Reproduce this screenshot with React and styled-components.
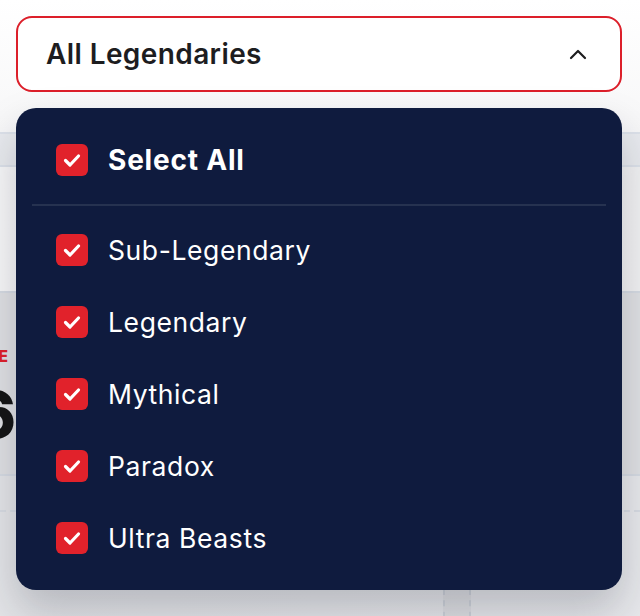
import React from "react";
import styled, { createGlobalStyle } from "styled-components";

const Global = createGlobalStyle`
  html, body { margin: 0; padding: 0; }
  body { font-family: Inter, "Noto Sans", sans-serif; background: #f6f6f7; }
  * { box-sizing: border-box; }
`;

const Page = styled.div`
  position: relative;
  width: 640px;
  height: 616px;
  overflow: hidden;
  display: flex;
  flex-direction: column;
  background: #f6f6f7;
  & > * { flex-shrink: 0; }
`;

const Header = styled.div`
  height: 132px;
  padding: 16px 18px 0 16px;
  background: linear-gradient(180deg, #ffffff 0%, #f7f7f8 100%);
`;

const Trigger = styled.button`
  width: 606px;
  height: 76px;
  border: 2px solid #dc1f2a;
  border-radius: 16px;
  background: #ffffff;
  display: flex;
  align-items: center;
  justify-content: space-between;
  padding: 0 32px 0 28px;
  font-family: Inter, sans-serif;
  font-size: 28px;
  font-weight: 600;
  color: #1d1d1f;
  letter-spacing: 0.4px;
  cursor: pointer;
`;

const Band = styled.div`
  height: 35px;
  background: #e9ebef;
  border-top: 2px solid #dde2ea;
  border-bottom: 2px solid #dde2ea;
`;

const Hero = styled.div`
  height: 124px;
  background: linear-gradient(90deg, #f8f8f9 0%, #f2f2f3 100%);
`;

const Stats = styled.div`
  height: 185px;
  background: #e0e1e4;
  border-top: 2px solid #d6dbe3;
  border-bottom: 2px solid #d6dbe3;
  display: flex;
  padding-top: 54px;
`;

const StatCol = styled.div`
  width: 18px;
  overflow: hidden;
  display: flex;
  flex-direction: column;
  align-items: flex-end;
  gap: 17px;
`;

const StatLabel = styled.div`
  white-space: nowrap;
  color: #e0202b;
  font-weight: 800;
  font-size: 16px;
  line-height: 19px;
  letter-spacing: 1px;
  margin-right: 9px;
`;

const StatValue = styled.div`
  white-space: nowrap;
  color: #151515;
  font-weight: 800;
  font-size: 64px;
  line-height: 1;
  margin-right: 2px;
`;

const Footer = styled.div`
  flex: 1 1 auto !important;
  min-height: 0;
  overflow: hidden;
  background: linear-gradient(90deg, #e4e5e8 0%, #e8e9ec 100%);
  padding-top: 34px;
`;

const DashedRule = styled.div`
  border-top: 2px dashed #d8dce3;
  display: flex;
  padding-left: 443px;
  padding-top: 77px;
`;

const DashedCell = styled.div`
  width: 28px;
  height: 40px;
  border-left: 2px dashed #cfd3da;
  border-right: 2px dashed #cfd3da;
  background: rgba(0, 0, 0, 0.03);
`;

const Panel = styled.div`
  position: absolute;
  top: 108px;
  left: 16px;
  width: 606px;
  height: 482px;
  border-radius: 20px;
  background: #0f1b3e;
  padding: 16px 16px;
  display: flex;
  flex-direction: column;
  box-shadow: 0 22px 44px rgba(20, 24, 40, 0.22);
`;

const Row = styled.label`
  height: 72px;
  display: flex;
  align-items: center;
  gap: 20px;
  padding-left: 24px;
  color: #ffffff;
  font-size: ${(p) => (p.$bold ? "28px" : "26.5px")};
  font-weight: ${(p) => (p.$bold ? 700 : 400)};
  letter-spacing: ${(p) => (p.$bold ? "0.8px" : "0.6px")};
  cursor: pointer;
`;

const Box = styled.span`
  width: 32px;
  height: 32px;
  border-radius: 6px;
  background: #e1222b;
  display: flex;
  align-items: center;
  justify-content: center;
  flex-shrink: 0;
`;

const Divider = styled.div`
  height: 2px;
  background: #263250;
  margin: 8px 0;
`;

const Check = () => (
  <Box>
    <svg width="24" height="24" viewBox="0 0 24 24" fill="none">
      <path d="M5.5 12.5 L10 17 L18.5 8" stroke="#fff" strokeWidth="3.2" strokeLinecap="round" strokeLinejoin="round" />
    </svg>
  </Box>
);

const Chevron = () => (
  <svg width="20" height="12" viewBox="0 0 20 12" fill="none">
    <path d="M3 10 L10 3 L17 10" stroke="#1d1d1f" strokeWidth="2.2" strokeLinecap="round" strokeLinejoin="round" />
  </svg>
);

const items = ["Sub-Legendary", "Legendary", "Mythical", "Paradox", "Ultra Beasts"];

export default function App() {
  return (
    <>
      <Global />
      <Page>
        <Header>
          <Trigger>
            <span>All Legendaries</span>
            <Chevron />
          </Trigger>
        </Header>
        <Band />
        <Hero />
        <Stats>
          <StatCol>
            <StatLabel>SCORE</StatLabel>
            <StatValue>16</StatValue>
          </StatCol>
        </Stats>
        <Footer>
          <DashedRule>
            <DashedCell />
          </DashedRule>
        </Footer>
        <Panel>
          <Row $bold>
            <Check />
            Select All
          </Row>
          <Divider />
          {items.map((t) => (
            <Row key={t}>
              <Check />
              {t}
            </Row>
          ))}
        </Panel>
      </Page>
    </>
  );
}
